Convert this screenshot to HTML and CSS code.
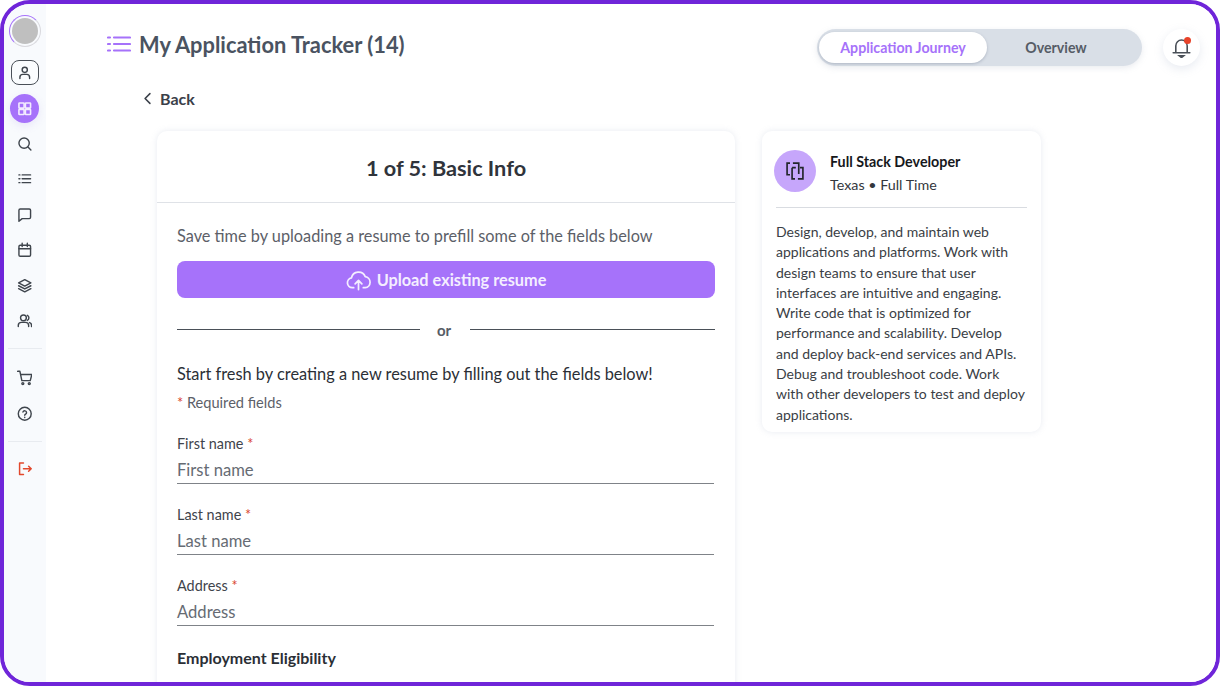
FILE: index.html
```html
<!DOCTYPE html>
<html lang="en">
<head>
<meta charset="utf-8">
<title>My Application Tracker</title>
<link rel="stylesheet" href="styles.css">
</head>
<body>
<div class="frame">
  <aside class="sidebar">
    <div class="avatar-ring"><div class="avatar"></div></div>
    <div class="nav-box"><svg class="ico" viewBox="0 0 24 24"><circle cx="12" cy="7.500" r="4"/><path d="M4.500 21v-2c0-3 2-4.500 4.500-4.500h6c2.500 0 4.500 1.500 4.500 4.500v2"/></svg></div>
    <div class="nav-active"><svg class="ico-w" viewBox="0 0 24 24"><rect x="3" y="3" width="8" height="8" rx="1"/><rect x="13" y="3" width="8" height="8" rx="1"/><rect x="3" y="13" width="8" height="8" rx="1"/><rect x="13" y="13" width="8" height="8" rx="1"/></svg></div>
    <div class="nav-list">
      <div class="nav-item"><svg class="ico" viewBox="0 0 24 24"><circle cx="11" cy="11" r="8"/><path d="M17 17l4.500 4.500"/></svg></div>
      <div class="nav-item"><svg class="ico" viewBox="0 0 24 24"><path d="M8 6h13M8 12h13M8 18h13M3 6h1.500M3 12h1.500M3 18h1.500"/></svg></div>
      <div class="nav-item"><svg class="ico" viewBox="0 0 24 24"><path d="M3 5a2 2 0 0 1 2-2h14a2 2 0 0 1 2 2v11a2 2 0 0 1-2 2H8l-5 4z"/></svg></div>
      <div class="nav-item"><svg class="ico" viewBox="0 0 24 24"><rect x="3" y="5" width="18" height="17" rx="2"/><path d="M3 10.500h18M8 2v5M16 2v5"/></svg></div>
      <div class="nav-item"><svg class="ico" viewBox="0 0 24 24"><path d="M12 2.500 2.500 7.500l9.500 5 9.500-5zM2.500 12l9.500 5 9.500-5M2.500 16.500l9.500 5 9.500-5"/></svg></div>
      <div class="nav-item"><svg class="ico" viewBox="0 0 24 24"><circle cx="10" cy="7.500" r="4.500"/><path d="M2 21v-2c0-3 2.500-4.500 5-4.500h6c2.500 0 5 1.500 5 4.500v2M16 3.500a4.500 4.500 0 0 1 0 8M19.500 14.800c1.800.6 3 2 3 4.200v2"/></svg></div>
    </div>
    <div class="nav-rule"></div>
    <div class="nav-list">
      <div class="nav-item"><svg class="ico" viewBox="0 0 24 24"><path d="M1 2h3.500l3 14.500h13L23 7H5.500"/><circle cx="9" cy="21" r="1.500"/><circle cx="19" cy="21" r="1.500"/></svg></div>
      <div class="nav-item"><svg class="ico" viewBox="0 0 24 24"><circle cx="12" cy="12" r="10"/><path d="M9.200 9.300a2.900 2.900 0 0 1 5.600 1c0 2-2.800 2.400-2.800 4M12 17.500v.3"/></svg></div>
    </div>
    <div class="nav-rule"></div>
    <div class="nav-item logout"><svg class="ico-r" viewBox="0 0 24 24"><path d="M10 3H4v18h6M10 12h12M18 8l4 4-4 4"/></svg></div>
  </aside>

  <main class="main">
    <header class="topbar">
      <div class="title-group">
        <svg class="title-ico" viewBox="0 0 24 18"><path d="M7 2.500h16M7 9h16M7 15.500h16M1 2.500h2M1 9h2M1 15.500h2"/></svg>
        <h1 class="page-title">My Application Tracker (14)</h1>
      </div>
      <div class="top-right">
        <div class="toggle">
          <span class="toggle-on">Application Journey</span>
          <span class="toggle-off">Overview</span>
        </div>
        <div class="bell">
          <svg class="bell-ico" viewBox="0 0 24 24"><path d="M5.500 18V10a6.500 6.500 0 0 1 13 0v8M2.500 18h19"/><path class="bell-clap" d="M9.500 21.500h5l-2.500 2z"/></svg>
          <span class="bell-dot"></span>
        </div>
      </div>
    </header>

    <div class="back"><svg class="back-ico" viewBox="0 0 10 16"><path d="M8 2 2 8l6 6"/></svg><span>Back</span></div>

    <div class="columns">
      <section class="form-card">
        <h2 class="form-title">1 of 5: Basic Info</h2>
        <div class="form-body">
          <p class="hint">Save time by uploading a resume to prefill some of the fields below</p>
          <div class="upload">
            <svg class="upload-ico" viewBox="0 0 26 22"><path d="M8 19H6.500a5.200 5.200 0 0 1-.8-10.300A7.500 7.500 0 0 1 20 7.500 5.800 5.800 0 0 1 20 19h-2M13 21v-9M9.500 15l3.500-3.500 3.500 3.500"/></svg>
            <span>Upload existing resume</span>
          </div>
          <div class="or-row"><span class="or-line or-left"></span><span class="or-text">or</span><span class="or-line"></span></div>
          <p class="fresh">Start fresh by creating a new resume by filling out the fields below!</p>
          <p class="required"><span class="star">*</span> Required fields</p>
          <div class="field"><div class="label">First name <span class="star">*</span></div><div class="input">First name</div></div>
          <div class="field"><div class="label">Last name <span class="star">*</span></div><div class="input">Last name</div></div>
          <div class="field"><div class="label">Address <span class="star">*</span></div><div class="input">Address</div></div>
          <h3 class="section-head">Employment Eligibility</h3>
        </div>
      </section>

      <section class="job-card">
        <div class="job-head">
          <div class="job-logo"><svg class="job-ico" viewBox="0 0 24 24"><path d="M6 2.500H2.500v14H6M9.500 2.500h7v13M8.500 8H13M8.500 8v13.500H12M15.500 21.500h6V8H18"/></svg></div>
          <div class="job-text">
            <div class="job-name">Full Stack Developer</div>
            <div class="job-meta">Texas • Full Time</div>
          </div>
        </div>
        <p class="job-desc">Design, develop, and maintain web applications and platforms. Work with design teams to ensure that user interfaces are intuitive and engaging. Write code that is optimized for performance and scalability. Develop and deploy back-end services and APIs. Debug and troubleshoot code. Work with other developers to test and deploy applications.</p>
      </section>
    </div>
  </main>
</div>
</body>
</html>
```

FILE: styles.css
```css
* { box-sizing: border-box; }
html, body { margin: 0; height: 686px; overflow: hidden; background: #fff; }
body { font-family: "Lato", "Noto Sans", sans-serif; color: #2b2f36; }
p, h1, h2, h3 { margin: 0; font-weight: inherit; }

.frame {
  width: 1220px; height: 686px; display: flex; overflow: hidden;
  border: 4px solid #6f25d9; border-radius: 30px; background: #fff;
}

.sidebar {
  width: 42px; flex: none; height: 100%; background: #f8fafd;
  display: flex; flex-direction: column; align-items: center;
  padding: 11px 1px 0 0; box-shadow: 8px 0 16px rgba(150, 165, 190, .10);
}
.avatar-ring { width: 32px; height: 32px; border-radius: 50%; border: 1px solid #d9d9de; border-left-color: #a672fa; border-top-color: #a672fa; padding: 2px; flex: none; }
.avatar { width: 100%; height: 100%; border-radius: 50%; background: #bfbfbf; }
.nav-box { width: 28px; height: 25px; margin-top: 13px; border: 1px solid #4a5058; border-radius: 8px; display: flex; align-items: center; justify-content: center; background: #fafcfe; flex: none; }
.nav-active { width: 29px; height: 29px; margin-top: 9px; border-radius: 50%; background: #a672fa; display: flex; align-items: center; justify-content: center; flex: none; box-shadow: 0 3px 8px rgba(150, 120, 220, .15); }
.nav-list { display: flex; flex-direction: column; align-items: center; margin-top: 3px; }
.nav-item { width: 29px; height: 35.400px; display: flex; align-items: center; justify-content: center; flex: none; }
.nav-rule { width: 34px; height: 1px; background: #e8ebf0; margin: 10px 0 8px; flex: none; }
.logout { margin-top: 1px; }
.ico, .ico-w, .ico-r { width: 15.500px; height: 15.500px; fill: none; stroke: #3f454d; stroke-width: 2.200; stroke-linecap: round; stroke-linejoin: round; }
.ico-w { stroke: #f3ecff; stroke-width: 2.500; }
.ico-r { stroke: #e2482c; stroke-width: 2.300; }

.main { flex: 1; min-width: 0; padding-left: 61px; background: #fff; }
.topbar { display: flex; justify-content: space-between; align-items: center; height: 37px; margin-top: 25px; padding-right: 16px; }
.title-group { display: flex; align-items: center; gap: 8px; margin-top: -7px; }
.title-ico { width: 24px; height: 18px; fill: none; stroke: #a672fa; stroke-width: 2.200; stroke-linecap: round; }
.page-title { font-size: 21.850px; font-weight: 700; color: #4a5361; }
.top-right { display: flex; align-items: center; gap: 21px; }
.toggle { width: 325px; height: 37px; border-radius: 19px; background: #d9dfe7; display: flex; align-items: center; padding: 2px; box-shadow: 0 2px 6px rgba(140, 150, 170, .18); font-size: 14.200px; font-weight: 700; }
.toggle-on { width: 168px; height: 31px; border-radius: 16px; background: #fff; color: #a672fa; display: flex; align-items: center; justify-content: center; box-shadow: 0 1px 3px rgba(120, 130, 150, .45); }
.toggle-off { flex: 1; text-align: center; color: #565c66; padding-right: 15px; }
.bell { position: relative; width: 37px; height: 37px; border-radius: 50%; background: #fff; display: flex; align-items: center; justify-content: center; box-shadow: 0 3px 10px rgba(150, 165, 190, .22); }
.bell-ico { width: 21px; height: 21px; fill: none; stroke: #4a5058; stroke-width: 1.800; stroke-linecap: round; }
.bell-clap { fill: #4a5058; }
.bell-dot { position: absolute; top: 8px; right: 9px; width: 7px; height: 7px; border-radius: 50%; background: #e8432a; }

.back { display: flex; align-items: center; gap: 8px; margin: 22px 0 0 36px; font-size: 16px; font-weight: 700; color: #3a4049; height: 20px; }
.back-ico { width: 9px; height: 13px; fill: none; stroke: #3a4049; stroke-width: 1.900; stroke-linecap: round; stroke-linejoin: round; }

.columns { display: flex; align-items: flex-start; gap: 27px; margin: 23px 0 0 50px; }
.form-card { width: 578px; height: 620px; flex: none; border-radius: 10px; background: #fff; box-shadow: 0 0 6px rgba(150, 165, 190, .22); }
.form-title { height: 72px; padding-top: 2px; border-bottom: 1px solid #dfe2e7; display: flex; align-items: center; justify-content: center; font-size: 21.700px; font-weight: 700; color: #30343b; }
.form-body { padding: 22px 20px 0; }
.hint { font-size: 16.300px; color: #5c6068; line-height: 22px; }
.upload { height: 37px; margin-top: 14px; border-radius: 8px; background: #a672fa; color: #f4eeff; font-size: 16.300px; font-weight: 700; display: flex; align-items: center; justify-content: center; gap: 6px; }
.upload-ico { width: 25px; height: 22px; fill: none; stroke: #f4eeff; stroke-width: 1.800; stroke-linecap: round; stroke-linejoin: round; }
.or-row { display: flex; align-items: flex-start; gap: 17px; height: 22px; margin-top: 21px; }
.or-line { flex: 1; height: 1px; background: #4a5058; margin-top: 10px; }
.or-left { flex: none; width: 243px; }
.or-text { font-size: 15px; font-weight: 700; color: #565c66; line-height: 22px; margin-right: 2px; }
.fresh { margin-top: 22px; font-size: 16.350px; color: #2b2f36; line-height: 22px; }
.required { margin-top: 8px; font-size: 14.600px; color: #5c6068; line-height: 20px; }
.star { color: #d9472f; }
.field { margin-top: 20px; width: 537px; }
.label { font-size: 14.400px; line-height: 20px; padding-top: 1px; height: 20px; color: #3f444c; }
.input { height: 31px; padding-top: 6px; font-size: 16.600px; line-height: 22px; color: #666b73; border-bottom: 1px solid #7f8388; }
.section-head { margin-top: 21px; font-size: 16px; font-weight: 700; line-height: 22px; color: #2b2f36; }

.job-card { width: 279px; height: 301px; flex: none; border-radius: 10px; background: #fff; padding: 0 14px; box-shadow: 0 0 6px rgba(150, 165, 190, .22); }
.job-head { display: flex; align-items: center; gap: 14px; height: 77px; padding-top: 4px; border-bottom: 1px solid #d9dce1; }
.job-logo { width: 42px; height: 42px; flex: none; border-radius: 50%; background: #c6a6fb; display: flex; align-items: center; justify-content: center; margin-left: -2px; }
.job-text { padding-top: 4px; }
.job-ico { width: 20px; height: 20px; fill: none; stroke: #23262b; stroke-width: 2; }
.job-name { font-size: 14.300px; font-weight: 700; color: #16181c; line-height: 20px; }
.job-meta { margin-top: 3px; font-size: 14.300px; color: #33373d; line-height: 20px; }
.job-desc { margin-top: 14px; font-size: 14px; line-height: 20.300px; color: #3a3e45; }
```
